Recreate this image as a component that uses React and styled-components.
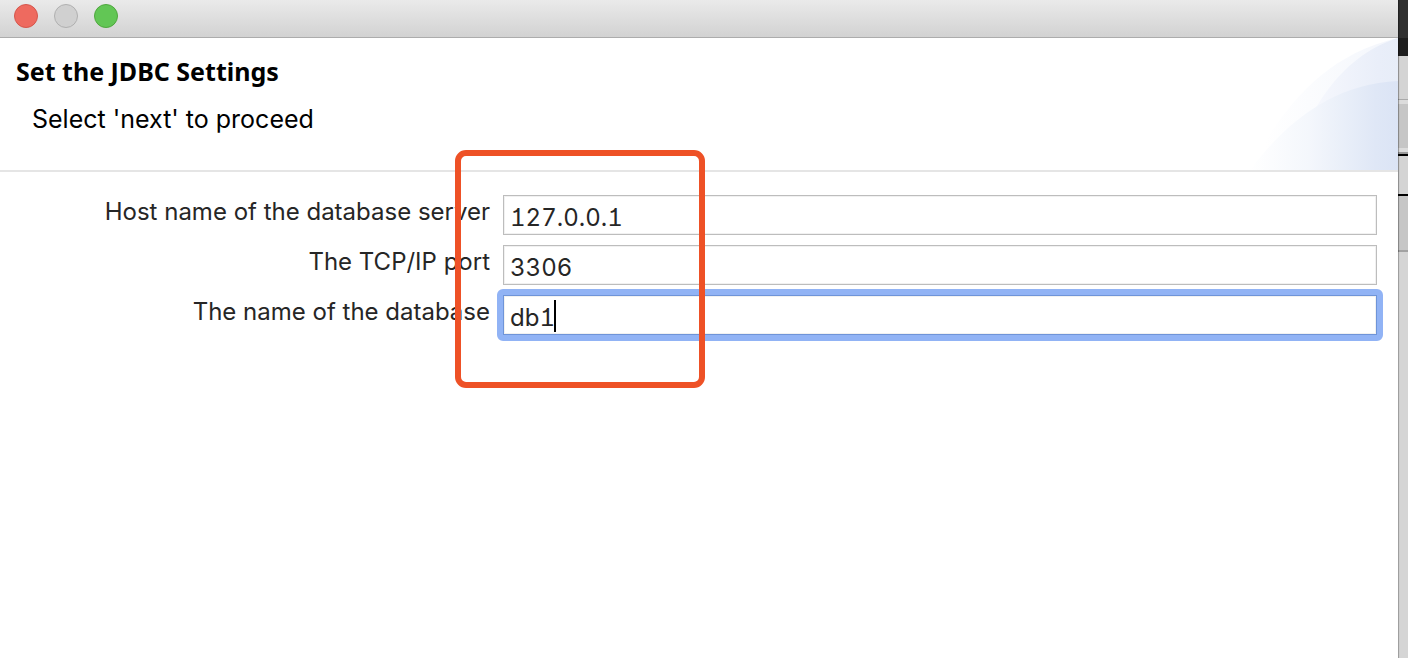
import React from "react";
import styled, { createGlobalStyle } from "styled-components";

const GlobalStyle = createGlobalStyle`
  *, *::before, *::after { box-sizing: border-box; }
  html, body, #root { height: 100%; }
  body { margin: 0; background: #d5d5d5; }
`;

const Desktop = styled.div`
  display: flex;
  min-height: 100%;
  font-family: Inter, "Liberation Sans", sans-serif;
`;

const Dialog = styled.main`
  flex: 1;
  min-width: 0;
  background: #fff;
`;

const TitleBar = styled.div`
  display: flex;
  align-items: flex-start;
  gap: 16px;
  height: 38px;
  padding: 4px 14px;
  background: linear-gradient(#eaeaea, #d2d2d2);
  border-bottom: 1px solid #acacac;
`;

const WindowButton = styled.button`
  width: 24px;
  height: 24px;
  padding: 0;
  border: 1px solid ${(p) => p.$edge};
  border-radius: 50%;
  background: ${(p) => p.$fill};
`;

const Header = styled.header`
  display: flex;
  justify-content: space-between;
  height: 134px;
  border-bottom: 2px solid #e5e5e5;
`;

const HeaderText = styled.div`
  padding: 15px 16px;
`;

const Title = styled.h1`
  margin: 0;
  font: 700 25px/36px "Noto Sans", "Open Sans", sans-serif;
  color: #000;
`;

const Message = styled.p`
  margin: 12px 0 0 16px;
  font-size: 25px;
  line-height: 36px;
  color: #000;
`;

const Banner = styled.svg`
  display: block;
  width: 148px;
  height: 132px;
`;

const Form = styled.form`
  position: relative;
  display: grid;
  gap: 10px;
  padding: 23px 21px 0 0;
`;

const Row = styled.div`
  display: grid;
  grid-template-columns: 490px 1fr;
  column-gap: 13px;
`;

const Label = styled.label`
  font-size: 24px;
  line-height: 34px;
  text-align: right;
  color: #262626;
`;

const Field = styled.div`
  position: relative;
  display: flex;
`;

const Input = styled.input`
  width: 100%;
  height: 40px;
  padding: 4px 6px 0;
  border: 1px solid ${(p) => (p.$active ? "#6f94d8" : "#bdbdbd")};
  border-radius: 0;
  outline: 0;
  background: #fff;
  box-shadow: inset 0 0 0 1px #f1f1f1;
  font: 24px/34px Inter, "Liberation Sans", sans-serif;
  font-feature-settings: "tnum", "cv01";
  color: #262626;
  caret-color: transparent;
`;

const Halo = styled.span`
  position: absolute;
  inset: -6px;
  border: 6px solid #91b3f5;
  border-radius: 6px;
  pointer-events: none;
`;

const Caret = styled.span`
  position: absolute;
  left: 51px;
  top: 5px;
  width: 2px;
  height: 32px;
  background: #000;
`;

const Highlight = styled.div`
  position: absolute;
  left: 455px;
  top: -22px;
  width: 250px;
  height: 238px;
  border: 6px solid #ee5126;
  border-radius: 11px;
  pointer-events: none;
`;

const Backdrop = styled.div`
  display: flex;
  flex-direction: column;
  width: 10px;
  box-shadow: inset 2px 0 1px -1px #999;
`;

const Band = styled.div`
  height: ${(p) => p.$height}px;
  background: ${(p) => p.$color};
  box-shadow: inset 2px 0 1px -1px rgba(0, 0, 0, 0.35);
`;

const bands = [
  [38, "#303030"],
  [18, "#1e1e1e"],
  [43, "#d4d4d4"],
  [1, "#aaaaaa"],
  [4, "#dcdcdc"],
  [44, "#c6c6c6"],
  [4, "#dcdcdc"],
  [2, "#9a9a9a"],
  [2, "#000000"],
  [38, "#d4d4d4"],
  [2, "#000000"],
  [54, "#c6c6c6"],
  [2, "#a2a2a2"],
];

const fields = [
  { id: "host", label: "Host name of the database server", value: "127.0.0.1" },
  { id: "port", label: "The TCP/IP port", value: "3306" },
  { id: "database", label: "The name of the database", value: "db1", active: true },
];

export default function App() {
  return (
    <Desktop>
      <GlobalStyle />
      <Dialog>
        <TitleBar>
          <WindowButton aria-label="Close" $fill="#ee6a5f" $edge="#d5564c" />
          <WindowButton aria-label="Minimize" disabled $fill="#d0d0d0" $edge="#b0b0b0" />
          <WindowButton aria-label="Zoom" $fill="#62c655" $edge="#4fa73e" />
        </TitleBar>
        <Header>
          <HeaderText>
            <Title>Set the JDBC Settings</Title>
            <Message>Select 'next' to proceed</Message>
          </HeaderText>
          <Banner viewBox="0 0 148 132" aria-hidden="true">
            <defs>
              <linearGradient id="outer" gradientUnits="userSpaceOnUse" x1="0" y1="0" x2="148" y2="0">
                <stop offset="0.1" stopColor="#fff" />
                <stop offset="1" stopColor="#f3f6fc" />
              </linearGradient>
              <linearGradient id="middle" gradientUnits="userSpaceOnUse" x1="50" y1="0" x2="148" y2="0">
                <stop offset="0" stopColor="#f9fafe" />
                <stop offset="0.8" stopColor="#e9eef9" />
                <stop offset="1" stopColor="#e7edf8" />
              </linearGradient>
              <linearGradient id="lower" gradientUnits="userSpaceOnUse" x1="0" y1="0" x2="148" y2="0">
                <stop offset="0" stopColor="#fff" />
                <stop offset="0.4" stopColor="#f4f7fc" />
                <stop offset="0.85" stopColor="#dfe7f6" />
                <stop offset="1" stopColor="#dbe4f5" />
              </linearGradient>
            </defs>
            <path d="M0 132C26 80 68 18 148 0V132Z" fill="url(#outer)" />
            <path d="M40 132C54 80 88 18 148 0V132Z" fill="url(#middle)" />
            <path d="M0 132C38 82 84 46 148 43V132Z" fill="url(#lower)" />
          </Banner>
        </Header>
        <Form>
          {fields.map((f) => (
            <Row key={f.id}>
              <Label htmlFor={f.id}>{f.label}</Label>
              <Field>
                <Input id={f.id} type="text" defaultValue={f.value} $active={f.active} />
                {f.active && <Halo />}
                {f.active && <Caret />}
              </Field>
            </Row>
          ))}
          <Highlight />
        </Form>
      </Dialog>
      <Backdrop>
        {bands.map(([height, color], i) => (
          <Band key={i} $height={height} $color={color} />
        ))}
      </Backdrop>
    </Desktop>
  );
}
